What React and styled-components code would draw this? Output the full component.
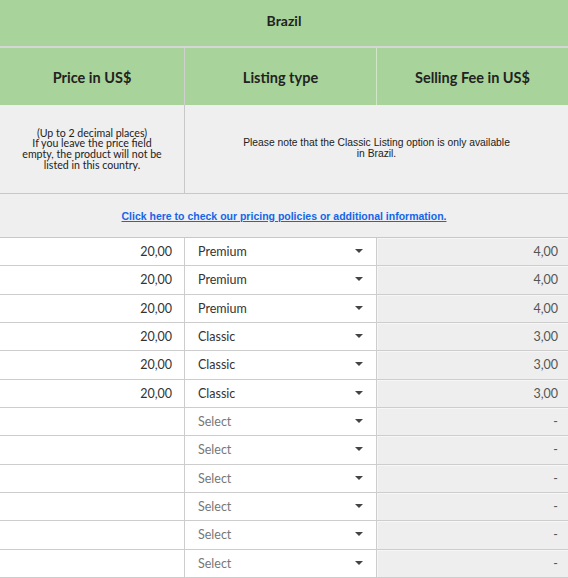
import styled, { createGlobalStyle } from "styled-components"

const Global = createGlobalStyle`
    html, body {
        margin: 0;
        padding: 0;
        background: #fff;
    }
    body {
        font-family: Lato, "Open Sans", sans-serif;
        color: #222;
    }
`

const Table = styled.div`
    width: 568px;
    display: grid;
    grid-template-columns: 185px 192px 191px;
`

const Title = styled.div`
    grid-column: 1 / 4;
    height: 48px;
    box-sizing: border-box;
    background: #a8d39a;
    border-bottom: 2px solid #d6d6d6;
    display: flex;
    align-items: center;
    justify-content: center;
    font-size: 14px;
    font-weight: 700;
    padding-bottom: 6px;
`

const HeadCell = styled.div`
    height: 57px;
    background: #a8d39a;
    border-right: ${p => (p.$last ? "none" : p.$light ? "1px solid #cfe7c6" : "1px solid #d0d0d0")};
    display: flex;
    align-items: center;
    justify-content: center;
    font-size: 14.5px;
    font-weight: 700;
    padding-top: 1px;
    box-sizing: border-box;
`

const InfoCell = styled.div`
    grid-column: ${p => p.$span || "auto"};
    height: 89px;
    background: #efefef;
    border-bottom: 1px solid #c8c8c8;
    border-right: ${p => (p.$first ? "1px solid #c8c8c8" : "none")};
    display: flex;
    align-items: center;
    justify-content: center;
    text-align: center;
    font-family: ${p => (p.$alt ? '"Liberation Sans", Arial, sans-serif' : 'Lato, sans-serif')};
    font-size: ${p => (p.$alt ? "10.3px" : "10.6px")};
    line-height: 10.7px;
    color: #222;
    padding: 0 ${p => (p.$alt ? "40px" : "18px")};
    box-sizing: border-box;
`

const LinkRow = styled.div`
    grid-column: 1 / 4;
    height: 43px;
    background: #efefef;
    border-bottom: 1px solid #c8c8c8;
    display: flex;
    align-items: center;
    justify-content: center;
`

const InfoLink = styled.a`
    font-family: "Liberation Sans", Arial, sans-serif;
    font-size: 10.5px;
    font-weight: 700;
    color: #1565e8;
    text-decoration: underline;
    cursor: pointer;
`

const Cell = styled.div`
    height: 28.33px;
    box-sizing: border-box;
    border-bottom: 1px solid #cdcdcd;
    display: flex;
    align-items: center;
    font-size: 12.5px;
    color: #333;
`

const PriceCell = styled(Cell)`
    justify-content: flex-end;
    padding-right: 12px;
    border-right: 1px solid #cdcdcd;
    background: #fff;
`

const TypeCell = styled(Cell)`
    justify-content: space-between;
    padding: 0 13px;
    border-right: 1px solid #cdcdcd;
    background: #fff;
    color: ${p => (p.$empty ? "#777" : "#333")};
`

const Caret = styled.span`
    width: 0;
    height: 0;
    border-left: 4.5px solid transparent;
    border-right: 4.5px solid transparent;
    border-top: 4.5px solid #444;
    margin-top: -1px;
`

const FeeCell = styled(Cell)`
    justify-content: flex-end;
    padding-right: 10px;
    background: #eeeeee;
    box-shadow: inset 1px 1px 0 #f6f6f6;
    color: #555;
`

const rows = [
    ["20,00", "Premium", "4,00"],
    ["20,00", "Premium", "4,00"],
    ["20,00", "Premium", "4,00"],
    ["20,00", "Classic", "3,00"],
    ["20,00", "Classic", "3,00"],
    ["20,00", "Classic", "3,00"],
    ["", "", "-"],
    ["", "", "-"],
    ["", "", "-"],
    ["", "", "-"],
    ["", "", "-"],
    ["", "", "-"],
]

function Row({ price, type, fee }) {
    return (
        <>
            <PriceCell>{price}</PriceCell>
            <TypeCell $empty={!type}>
                <span>{type || "Select"}</span>
                <Caret />
            </TypeCell>
            <FeeCell>{fee}</FeeCell>
        </>
    )
}

function App() {
    return (
        <>
            <Global />
            <Table>
                <Title>Brazil</Title>
                <HeadCell>Price in US$</HeadCell>
                <HeadCell $light>Listing type</HeadCell>
                <HeadCell $last>Selling Fee in US$</HeadCell>
                <InfoCell $first>
                    (Up to 2 decimal places)<br />
                    If you leave the price field<br />empty, the product will not be<br />listed in this country.
                </InfoCell>
                <InfoCell $span="2 / 4" $alt>
                    Please note that the Classic Listing option is only available<br />in Brazil.
                </InfoCell>
                <LinkRow>
                    <InfoLink>Click here to check our pricing policies or additional information.</InfoLink>
                </LinkRow>
                {rows.map((r, i) => (
                    <Row key={i} price={r[0]} type={r[1]} fee={r[2]} />
                ))}
            </Table>
        </>
    )
}

export default App
